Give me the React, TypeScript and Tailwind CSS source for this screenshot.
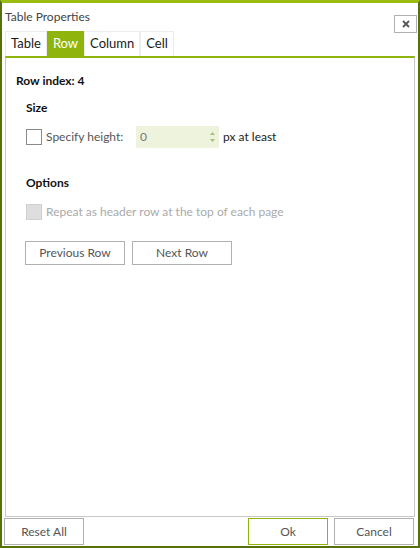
import React from 'react'

const font = { fontFamily: '"Segoe UI", Lato, "Noto Sans", sans-serif' }

function Tab({ label, active }: { label: string; active?: boolean }) {
  return (
    <div
      className={`h-[25px] px-[5px] flex items-center text-[13px] border-t border-x ${
        active ? 'bg-[#8fb50c] border-[#8fb50c] text-white' : 'bg-white border-[#ececec] text-[#1a1a1a]'
      }`}
    >
      {label}
    </div>
  )
}

function Button({ label, className = '', primary }: { label: string; className?: string; primary?: boolean }) {
  return (
    <button
      className={`h-[24px] border ${primary ? 'border-[#8fb50c]' : 'border-[#b0b0b0]'} bg-white text-[12px] text-[#555] ${className}`}
    >
      {label}
    </button>
  )
}

export default function App() {
  return (
    <div style={font} className="w-[420px] h-[548px] bg-white flex flex-col border-x-2 border-b-2 border-t-[3px] border-x-[#56700a] border-b-[#56700a] border-t-[#9bbd10]">
      {/* Title */}
      <div className="h-[28px] flex items-center justify-between pl-[3px] pr-[1px]">
        <span className="text-[12px] text-[#444]">Table Properties</span>
        <button className="w-[23px] h-[18px] mt-[13px] border border-[#b0b0b0] flex items-center justify-center">
          <svg width="8" height="8" viewBox="0 0 8 8">
            <path d="M1 1 L7 7 M7 1 L1 7" stroke="#555" strokeWidth="1.8" />
          </svg>
        </button>
      </div>

      {/* Tabs */}
      <div className="flex px-[3px]">
        <Tab label="Table" />
        <Tab label="Row" active />
        <Tab label="Column" />
        <Tab label="Cell" />
      </div>

      {/* Panel */}
      <div className="flex-1 mx-[3px] border-t-2 border-t-[#8fb50c] border-x border-b border-x-[#c8c8c8] border-b-[#c8c8c8] px-[10px] pt-[14px]">
        <div className="text-[12px] font-bold text-[#111]">Row index: 4</div>

        <div className="pl-[10px]">
          <div className="text-[12px] font-bold text-[#111] mt-[9px]">Size</div>
          <div className="flex items-center mt-[9px]">
            <div className="w-[16px] h-[16px] border border-[#8a8a8a] bg-white" />
            <span className="ml-[4px] text-[12px] text-[#555] w-[90px]">Specify height:</span>
            <div className="w-[83px] h-[22px] bg-[#eef3dd] flex items-center justify-between pl-[4px] pr-[4px]">
              <span className="text-[12px] text-[#777]">0</span>
              <div className="flex flex-col gap-[4px]">
                <svg width="5" height="3" viewBox="0 0 5 3"><path d="M0 3 L2.5 0 L5 3 Z" fill="#a9bf74" /></svg>
                <svg width="5" height="3" viewBox="0 0 5 3"><path d="M0 0 L2.5 3 L5 0 Z" fill="#a9bf74" /></svg>
              </div>
            </div>
            <span className="ml-[4px] text-[12px] text-[#222]">px at least</span>
          </div>

          <div className="text-[12px] font-bold text-[#111] mt-[26px]">Options</div>
          <div className="flex items-center mt-[11px]">
            <div className="w-[16px] h-[16px] border border-[#cfcfcf] bg-[#dedede]" />
            <span className="ml-[4px] text-[12px] text-[#aaa]">Repeat as header row at the top of each page</span>
          </div>

          <div className="flex gap-[7px] mt-[20px] -ml-[1px]">
            <Button label="Previous Row" className="w-[100px]" />
            <Button label="Next Row" className="w-[100px]" />
          </div>
        </div>
      </div>

      {/* Footer */}
      <div className="flex items-center justify-between px-[2px] pt-[1px] pb-[1px]">
        <Button label="Reset All" className="w-[80px] h-[27px]" />
        <div className="flex gap-[6px] mr-[2px]">
          <Button label="Ok" className="w-[80px] h-[27px]" primary />
          <Button label="Cancel" className="w-[80px] h-[27px]" />
        </div>
      </div>
    </div>
  )
}
